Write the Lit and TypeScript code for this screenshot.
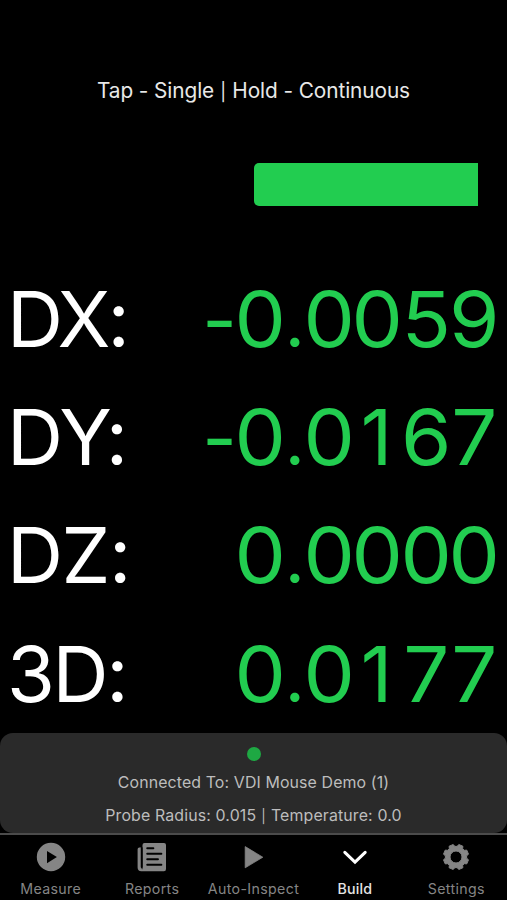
import { LitElement, html, css, svg, nothing } from "lit";
import { customElement, property } from "lit/decorators.js";
import { classMap } from "lit/directives/class-map.js";
import { styleMap } from "lit/directives/style-map.js";

const GEAR = (() => {
  const pts: string[] = [];
  const teeth = 8;
  const step = (Math.PI * 2) / teeth;
  for (let i = 0; i < teeth; i++) {
    const a = (i + 0.5) * step;
    for (const [off, r] of [[-0.36, 10.7], [-0.22, 12.8], [0.22, 12.8], [0.36, 10.7]]) {
      const t = a + off * step;
      pts.push(`${(15 + r * Math.cos(t)).toFixed(2)} ${(15 + r * Math.sin(t)).toFixed(2)}`);
    }
  }
  return `M${pts.join("L")}Z M21 15a6 6 0 1 0 -12 0a6 6 0 1 0 12 0Z`;
})();

const ICONS: Record<string, unknown> = {
  measure: svg`<path fill-rule="evenodd" d="M15 .8a14.2 14.2 0 1 0 0 28.4a14.2 14.2 0 1 0 0-28.4ZM11 8.9v12.4L20.9 15.1Z"/>`,
  reports: svg`
    <path d="M2.3 5.6H4.6V26.2Q4.6 27 5.1 27.4Q5.5 27 5.5 26.2V3Q5.5 1 7.5 1H27Q29 1 29 3V27Q29 29.2 27 29.2H4.3Q.6 29.2.6 25.6V7.3Q.6 5.6 2.3 5.6Z"/>
    <path class="cut" d="M10.2 6.3H16.4M10.2 11.8H24.4M10.2 17.3H21M10.2 22.8H24.4M4.7 6V25"/>`,
  inspect: svg`<path d="M6.2 4.6V25.8L23.8 15.2Z" stroke="currentColor" stroke-width=".8" stroke-linejoin="round"/>`,
  build: svg`<path class="line" d="M4.8 10.3L15 20.2L25.2 10.3"/>`,
  settings: svg`<path fill-rule="evenodd" stroke="currentColor" stroke-width="1" stroke-linejoin="round" d=${GEAR}/>`,
};

@customElement("axis-readout")
export class AxisReadout extends LitElement {
  @property() label = "";
  @property() value = "";
  @property({ type: Number }) tracking = 0;

  static styles = css`
    :host {
      display: flex;
      justify-content: space-between;
      align-items: center;
      height: 118.1px;
      padding: 0 8.5px 0 7px;
      font-size: 77.6px;
      line-height: 1;
      white-space: nowrap;
    }
    .label { color: #fff; }
    .value { display: flex; align-items: baseline; color: #22cd50; }
    .char { display: flex; justify-content: center; width: 48.4px; transform: scaleX(1.05); }
    .point { width: 20.2px; font-size: 0.9em; transform: none; }
    .minus { width: 33px; transform: translateY(1px) scaleX(0.97); }
    .one { transform: translateX(-1px); }
  `;

  render() {
    return html`<span class="label" style=${styleMap({ letterSpacing: `${this.tracking}px` })}>${this.label}:</span
      ><span class="value">${[...this.value].map(
        (c) => html`<span class=${classMap({ char: true, point: c === ".", minus: c === "-", one: c === "1" })}>${c}</span>`
      )}</span>`;
  }
}

@customElement("tab-item")
export class TabItem extends LitElement {
  @property() icon = "";
  @property() label = "";
  @property({ type: Boolean }) active = false;

  static styles = css`
    :host { flex: 1 1 0; min-width: 0; }
    .tab {
      display: flex;
      flex-direction: column;
      align-items: center;
      padding-top: 7px;
      color: #858585;
    }
    .active { color: #fff; }
    svg { display: block; width: 30px; height: 30px; fill: currentColor; }
    .cut { fill: none; stroke: #000; stroke-width: 1.9; stroke-linecap: round; }
    .line { fill: none; stroke: currentColor; stroke-width: 3; stroke-linecap: round; stroke-linejoin: miter; }
    .text {
      margin-top: 8px;
      font-size: 14.2px;
      line-height: 18px;
      letter-spacing: 0.35px;
      white-space: nowrap;
    }
    .active .text { letter-spacing: 0.2px; font-weight: 500; color: #e4e4e4; }
  `;

  render() {
    return html`<div class=${classMap({ tab: true, active: this.active })}>
      <svg viewBox="0 0 30 30">${ICONS[this.icon] ?? nothing}</svg>
      <span class="text">${this.label}</span>
    </div>`;
  }
}

@customElement("app-root")
export class AppRoot extends LitElement {
  static styles = css`
    :host {
      display: flex;
      flex-direction: column;
      height: 900px;
      overflow: hidden;
      box-sizing: border-box;
      background: #000;
      font-family: Inter, "Liberation Sans", sans-serif;
    }
    .hint {
      height: 27px;
      padding-top: 77px;
      text-align: center;
      font-size: 20.8px;
      line-height: 28px;
      letter-spacing: -0.08px;
      color: #e8e8e8;
      white-space: nowrap;
    }
    .rule { font-size: 0.85em; padding: 0 0.4px; }
    .gauge { display: flex; margin: 59px 29px 0; height: 43px; }
    .half { flex: 1; }
    .bar { flex: 1; background: #22cd50; border-radius: 5px 0 0 5px; }
    .axes { margin-top: 55px; height: 472px; }
    .status {
      display: flex;
      flex-direction: column;
      align-items: center;
      box-sizing: border-box;
      height: 100px;
      padding-top: 14px;
      border-radius: 13px;
      background: #2a2a2a;
      color: #bdbdbd;
      font-size: 15.9px;
      line-height: 20px;
      letter-spacing: 0.12px;
      white-space: nowrap;
    }
    .dot { width: 14px; height: 14px; border-radius: 50%; background: #1ea843; }
    .device { margin-top: 12px; }
    .probe { margin-top: 13px; letter-spacing: 0.14px; }
    .tabs { display: flex; flex: 1; border-top: 2px solid #4b4b4b; }
  `;

  private axes: [string, string, number][] = [
    ["DX", "-0.0059", -2.9],
    ["DY", "-0.0167", -1.2],
    ["DZ", "0.0000", -1.4],
    ["3D", "0.0177", -2.4],
  ];

  private tabs = [
    ["measure", "Measure"],
    ["reports", "Reports"],
    ["inspect", "Auto-Inspect"],
    ["build", "Build"],
    ["settings", "Settings"],
  ];

  render() {
    return html`
      <div class="hint">Tap - Single <span class="rule">|</span> Hold - Continuous</div>
      <div class="gauge"><div class="half"></div><div class="bar"></div></div>
      <div class="axes">
        ${this.axes.map(([l, v, t]) => html`<axis-readout label=${l} value=${v} tracking=${t}></axis-readout>`)}
      </div>
      <div class="status">
        <div class="dot"></div>
        <div class="device">Connected To: VDI Mouse Demo (1)</div>
        <div class="probe">Probe Radius: 0.015 <span class="rule">|</span> Temperature: 0.0</div>
      </div>
      <nav class="tabs">
        ${this.tabs.map(([i, l]) => html`<tab-item icon=${i} label=${l} ?active=${i === "build"}></tab-item>`)}
      </nav>
    `;
  }
}
